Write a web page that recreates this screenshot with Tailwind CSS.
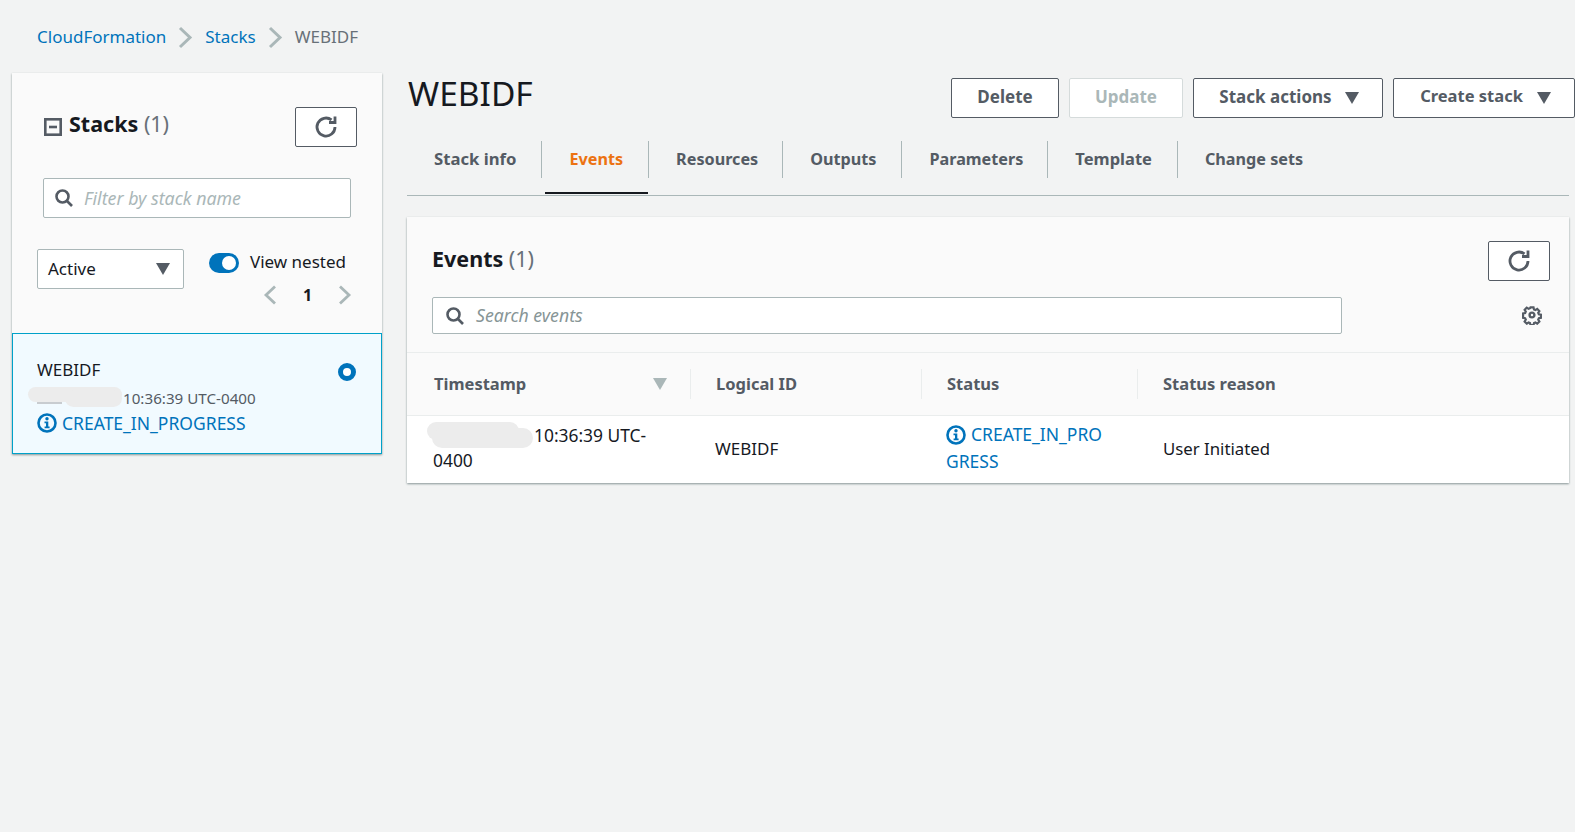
<!DOCTYPE html>
<html lang="en">
<head>
    <meta charset="UTF-8">
    <title>CloudFormation - Stack WEBIDF</title>
    <script src="https://cdn.jsdelivr.net/npm/@tailwindcss/browser@4"></script>
</head>
<body class="bg-[#f2f3f3] h-[832px] overflow-hidden font-['Noto_Sans',sans-serif] text-[17px] text-[#16191f]">
    <!-- Breadcrumbs -->
    <nav class="h-[73px] pl-[37px] pt-[24px] flex items-start gap-[12px] leading-[26px]">
        <a class="text-[#0073bb]">CloudFormation</a>
        <svg class="w-[15px] h-[26px]" viewBox="0 0 15 26" fill="none" stroke="#aab7b8" stroke-width="3"><path d="M2 4l10 9.500-10 9.500"/></svg>
        <a class="text-[#0073bb]">Stacks</a>
        <svg class="w-[15px] h-[26px]" viewBox="0 0 15 26" fill="none" stroke="#aab7b8" stroke-width="3"><path d="M2 4l10 9.500-10 9.500"/></svg>
        <span class="text-[#687078]">WEBIDF</span>
    </nav>

    <div class="flex items-start pl-[12px] gap-[25px]">
        <!-- Stacks panel -->
        <aside class="w-[370px] h-[381px] bg-[#fafafa] shadow-[0_1px_2px_#879596] flex flex-col">
            <div class="h-[260px] relative px-[25px]">
                <div class="flex items-start pt-[34px] pl-[7px] h-[105px]">
                    <svg class="w-[18px] h-[18px] mt-[11px]" viewBox="0 0 18 18" fill="none" stroke="#545b64" stroke-width="2.600"><rect x="1.300" y="1.300" width="15.400" height="15.400"/><path d="M5 9h8"/></svg>
                    <h2 class="ml-[7px] text-[21.500px] leading-[34px] font-bold">Stacks <span class="font-normal text-[#687078]">(1)</span></h2>
                    <button class="ml-auto w-[62px] h-[40px] bg-white border border-[#545b64] rounded-[2px] flex items-center justify-center">
                        <svg class="w-[24px] h-[24px]" viewBox="0 0 24 24" fill="none" stroke="#545b64" stroke-width="2.800"><path d="M21 12a9 9 0 1 1-3.500-7.100"/><path d="M21 1.500V7.500h-6"/></svg>
                    </button>
                </div>
                <div class="ml-[6px] w-[308px] h-[40px] bg-white border border-[#aab7b8] rounded-[2px] flex items-center">
                    <svg class="ml-[10px] w-[20px] h-[20px]" viewBox="0 0 20 20" fill="none" stroke="#545b64" stroke-width="2.600"><circle cx="8.500" cy="8.500" r="6"/><path d="M13 13l5 5"/></svg>
                    <span class="ml-[10px] italic text-[#aab7b8] text-[17.800px]">Filter by stack name</span>
                </div>
                <div class="flex items-start mt-[31px]">
                    <div class="w-[147px] h-[40px] bg-white border border-[#aab7b8] rounded-[2px] flex items-center justify-between pl-[10px] pr-[13px]">
                        <span>Active</span>
                        <svg class="w-[14px] h-[12px]" viewBox="0 0 14 12" fill="#545b64"><path d="M0 0h14L7 12z"/></svg>
                    </div>
                    <div class="ml-[25px] flex flex-col">
                        <div class="flex items-center h-[26px]">
                            <div class="w-[30px] h-[20px] mt-[1px] rounded-full bg-[#0073bb] flex items-center justify-end pr-[3px]"><div class="w-[14px] h-[14px] rounded-full bg-white"></div></div>
                            <span class="ml-[11px]">View nested</span>
                        </div>
                        <div class="flex items-center h-[26px] mt-[7px] pl-[53px]">
                            <svg class="w-[16px] h-[20px]" viewBox="0 0 16 20" fill="none" stroke="#aab7b8" stroke-width="2.800"><path d="M13 1.500l-9 8.500 9 8.500"/></svg>
                            <span class="ml-[25px] w-[12px] font-bold text-[16px]">1</span>
                            <svg class="ml-[22px] w-[16px] h-[20px]" viewBox="0 0 16 20" fill="none" stroke="#aab7b8" stroke-width="2.800"><path d="M3 1.500l9 8.500-9 8.500"/></svg>
                        </div>
                    </div>
                </div>
            </div>
            <!-- Selected stack -->
            <div class="relative h-[121px] bg-[#f1faff] border border-[#00a1c9] pl-[24px] pt-[23px]">
                <div class="leading-[26px]">WEBIDF</div>
                <div class="text-[15.200px] leading-[24px] mt-[3px] text-[#545b64] pl-[86px]">10:36:39 UTC-0400</div>
                <div class="flex items-center text-[#0073bb] text-[17.500px] leading-[26px]">
                    <svg class="w-[20px] h-[20px] mr-[5px]" viewBox="0 0 20 20"><circle cx="10" cy="10" r="8.500" fill="none" stroke="#0073bb" stroke-width="2.600"/><circle cx="10" cy="5.800" r="1.700" fill="#0073bb"/><path d="M7.500 8.500h3.800v5h1.300v1.700h-5v-1.700h1.400v-3.300h-1.500z" fill="#0073bb"/></svg>
                    CREATE_IN_PROGRESS
                </div>
                <div class="absolute right-[25px] top-[29px] w-[18px] h-[18px] rounded-full border-[5px] border-[#0073bb] bg-white"></div>
                <!-- redacted date -->
                <div class="absolute left-[24px] top-[68px] w-[25px] h-[2px] bg-[#c8ccd0]"></div>
                <div class="absolute left-[15px] top-[53px] w-[94px] h-[15px] rounded-full bg-[#ececec]"></div>
                <div class="absolute left-[52px] top-[56px] w-[57px] h-[17px] rounded-full bg-[#ececec]"></div>
            </div>
        </aside>

        <!-- Stack details -->
        <main class="w-[1162px]">
            <div class="flex items-start h-[68px] -mr-[6px]">
                <h1 class="pl-[1px] text-[33.500px] leading-[40px]">WEBIDF</h1>
                <div class="ml-auto flex gap-[10px] mt-[5px] font-bold text-[#545b64]">
                    <button class="w-[108px] h-[40px] pb-[2px] bg-white border border-[#545b64] rounded-[2px]">Delete</button>
                    <button class="w-[114px] h-[40px] pb-[2px] bg-white border border-[#d5dbdb] rounded-[2px] text-[#aab7b8]">Update</button>
                    <button class="w-[190px] h-[40px] pl-[2px] bg-white border border-[#545b64] rounded-[2px] flex items-center justify-center gap-[13px]"><span class="pb-[2px]">Stack actions</span> <svg class="w-[14px] h-[12px]" viewBox="0 0 14 12" fill="#545b64"><path d="M0 0h14L7 12z"/></svg></button>
                    <button class="w-[182px] h-[40px] pl-[3px] bg-white border border-[#545b64] rounded-[2px] flex items-center justify-center gap-[14px] text-[16.500px]"><span class="pb-[3px]">Create stack</span> <svg class="w-[14px] h-[12px]" viewBox="0 0 14 12" fill="#545b64"><path d="M0 0h14L7 12z"/></svg></button>
                </div>
            </div>

            <!-- Tabs -->
            <div class="h-[55px] border-b border-[#aab7b8] flex font-bold text-[16.200px] text-[#545b64] leading-[26px]">
                <div class="h-[37px] pl-[27px] pr-[25px] pt-[5px] border-r border-[#aab7b8] text-[16.700px]">Stack info</div>
                <div class="relative h-[37px] pl-[27px] pr-[25px] pt-[5px] border-r border-[#aab7b8] text-[#ec7211]">Events<div class="absolute left-[3px] right-0 top-[51px] h-[2px] bg-[#16191f]"></div></div>
                <div class="h-[37px] pl-[27px] pr-[24px] pt-[5px] border-r border-[#aab7b8]">Resources</div>
                <div class="h-[37px] pl-[27px] pr-[25px] pt-[5px] border-r border-[#aab7b8]">Outputs</div>
                <div class="h-[37px] pl-[27px] pr-[24px] pt-[5px] border-r border-[#aab7b8]">Parameters</div>
                <div class="h-[37px] pl-[27px] pr-[25px] pt-[5px] border-r border-[#aab7b8] text-[16.500px]">Template</div>
                <div class="h-[37px] pl-[27px] pt-[5px]">Change sets</div>
            </div>

            <!-- Events card -->
            <section class="mt-[21px] h-[266px] bg-[#fafafa] shadow-[0_1px_2px_#879596] relative">
                <div class="h-[136px] relative border-b border-[#eaeded]">
                    <h2 class="absolute left-[25px] top-[26px] text-[21.500px] leading-[32px] font-bold">Events <span class="font-normal text-[#687078]">(1)</span></h2>
                    <button class="absolute right-[19px] top-[24px] w-[62px] h-[40px] bg-white border border-[#545b64] rounded-[2px] flex items-center justify-center">
                        <svg class="w-[24px] h-[24px]" viewBox="0 0 24 24" fill="none" stroke="#545b64" stroke-width="2.800"><path d="M21 12a9 9 0 1 1-3.500-7.100"/><path d="M21 1.500V7.500h-6"/></svg>
                    </button>
                    <div class="absolute left-[25px] top-[80px] w-[910px] h-[37px] bg-white border border-[#aab7b8] rounded-[2px] flex items-center">
                        <svg class="ml-[12px] w-[20px] h-[20px]" viewBox="0 0 20 20" fill="none" stroke="#545b64" stroke-width="2.600"><circle cx="8.500" cy="8.500" r="6"/><path d="M13 13l5 5"/></svg>
                        <span class="ml-[11px] italic text-[#879596] text-[17.700px]">Search events</span>
                    </div>
                    <svg class="absolute right-[27px] top-[88px] w-[20px] h-[20px]" viewBox="0 0 20 20" fill="none" stroke="#545b64" stroke-width="2.400"><circle cx="10" cy="10" r="2.400"/><path d="M8.300 1.500h3.400l.5 2.300 1.600.7 2-1.300 2.400 2.400-1.300 2 .7 1.600 2.300.5v3.400l-2.300.5-.7 1.600 1.300 2-2.400 2.400-2-1.300-1.600.7-.5 2.300H8.300l-.5-2.300-1.600-.7-2 1.300-2.400-2.400 1.300-2-.7-1.600-2.300-.5V8.300l2.300-.5.7-1.600-1.300-2 2.400-2.400 2 1.300 1.600-.7z" transform="translate(1 1) scale(.9)"/></svg>
                </div>
                <!-- Table header -->
                <div class="h-[63px] grid grid-cols-[284px_231px_216px_1fr] items-center font-bold text-[16.500px] text-[#545b64] border-b border-[#eaeded]">
                    <div class="h-[30px] pl-[27px] pr-[23px] flex items-center justify-between border-r border-[#eaeded]">Timestamp <svg class="w-[14px] h-[12px]" viewBox="0 0 14 12" fill="#aab7b8"><path d="M0 0h14L7 12z"/></svg></div>
                    <div class="h-[30px] pl-[25px] flex items-center border-r border-[#eaeded]">Logical ID</div>
                    <div class="h-[30px] pl-[25px] flex items-center border-r border-[#eaeded]">Status</div>
                    <div class="h-[30px] pl-[25px] flex items-center">Status reason</div>
                </div>
                <!-- Table row -->
                <div class="h-[67px] bg-white grid grid-cols-[284px_231px_216px_1fr] items-center relative">
                    <div class="pl-[26px] pr-[20px] pb-[4px] text-[17.400px] leading-[25px]"><span class="inline-block w-[101px]"></span>10:36:39 UTC-0400</div>
                    <div class="pl-[24px] pb-[2px]">WEBIDF</div>
                    <div class="pl-[24px] pr-[32px] pb-[3px] break-all text-[#0073bb] text-[17.500px] leading-[27px]"><svg class="inline-block align-[-4px] w-[20px] h-[20px] mr-[5px]" viewBox="0 0 20 20"><circle cx="10" cy="10" r="8.500" fill="none" stroke="#0073bb" stroke-width="2.600"/><circle cx="10" cy="5.800" r="1.700" fill="#0073bb"/><path d="M7.500 8.500h3.800v5h1.300v1.700h-5v-1.700h1.400v-3.300h-1.500z" fill="#0073bb"/></svg>CREATE_IN_PROGRESS</div>
                    <div class="pl-[25px] pb-[2px] text-[16.800px]">User Initiated</div>
                    <!-- redacted date -->
                    <div class="absolute left-[20px] top-[6px] w-[92px] h-[18px] rounded-full bg-[#ececec]"></div>
                    <div class="absolute left-[25px] top-[12px] w-[101px] h-[20px] rounded-full bg-[#ececec]"></div>
                </div>
            </section>
        </main>
    </div>
</body>
</html>
